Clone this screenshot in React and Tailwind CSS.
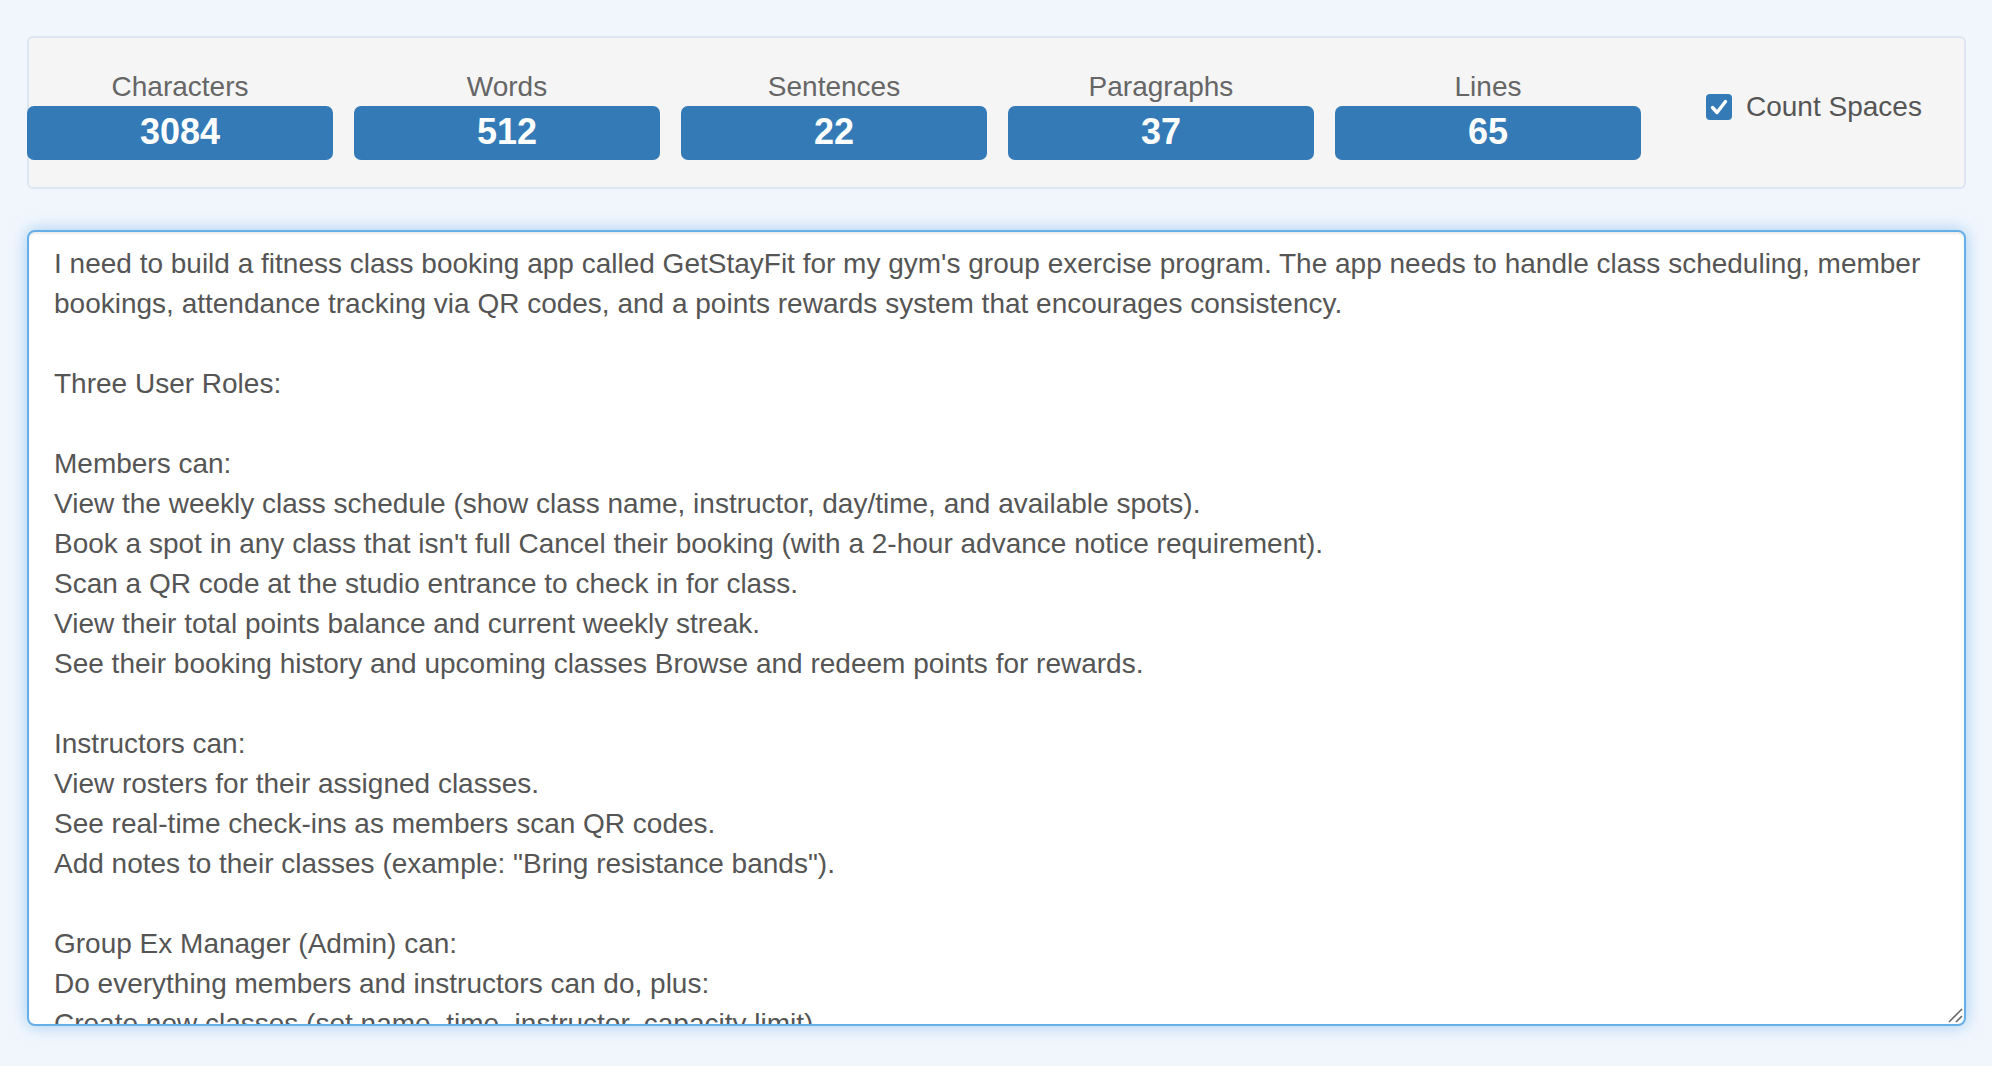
import React from 'react';

const stats = [
  { label: 'Characters', value: 3084 },
  { label: 'Words', value: 512 },
  { label: 'Sentences', value: 22 },
  { label: 'Paragraphs', value: 37 },
  { label: 'Lines', value: 65 },
];

const text = `I need to build a fitness class booking app called GetStayFit for my gym's group exercise program. The app needs to handle class scheduling, member bookings, attendance tracking via QR codes, and a points rewards system that encourages consistency.

Three User Roles:

Members can:
View the weekly class schedule (show class name, instructor, day/time, and available spots).
Book a spot in any class that isn't full Cancel their booking (with a 2-hour advance notice requirement).
Scan a QR code at the studio entrance to check in for class.
View their total points balance and current weekly streak.
See their booking history and upcoming classes Browse and redeem points for rewards.

Instructors can:
View rosters for their assigned classes.
See real-time check-ins as members scan QR codes.
Add notes to their classes (example: "Bring resistance bands").

Group Ex Manager (Admin) can:
Do everything members and instructors can do, plus:
Create new classes (set name, time, instructor, capacity limit).
Edit or cancel existing classes.
Manage the rewards catalog and point values.
View attendance reports for every class.`;

const Stat = ({ label, value }) => (
  <div className="w-[306px] flex flex-col items-center">
    <div className="text-[28px] leading-[40px] text-[#666]">{label}</div>
    <div className="-mt-px h-[54px] w-full rounded-[7px] bg-[#337ab7] pb-[2px] flex items-center justify-center text-white font-bold text-[36px] leading-none">
      {value}
    </div>
  </div>
);

const Checkbox = () => (
  <div className="w-[26px] h-[26px] rounded-[4px] bg-[#337ab7] flex items-center justify-center">
    <svg viewBox="0 0 26 26" className="w-[26px] h-[26px]" fill="none">
      <path d="M6.5 13.5l4.5 5L19.5 7.5" stroke="white" strokeWidth="3.4" strokeLinecap="round" strokeLinejoin="round" />
    </svg>
  </div>
);

export default function App() {
  return (
    <div className="min-h-screen bg-[#f1f6fd] pt-9 pl-[27px] pr-[26px] font-['Liberation_Sans',Arial,sans-serif]">
      <div className="h-[153px] border-2 border-[#dde6f0] rounded-[6px] bg-[#f5f5f5] pt-[29px] flex items-start">
        <div className="-ml-[2px] flex gap-[21px]">
          {stats.map((s) => (
            <Stat key={s.label} {...s} />
          ))}
        </div>
        <label className="ml-[65px] mt-[20px] flex items-center gap-[14px] h-[40px]">
          <Checkbox />
          <span className="text-[28px] leading-[40px] text-[#555]">Count Spaces</span>
        </label>
      </div>

      <div className="relative mt-[41px] h-[796px] border-2 border-[#66afe9] rounded-[8px] bg-white shadow-[inset_0_2px_2px_rgba(0,0,0,0.075),0_0_16px_rgba(102,175,233,0.6)] overflow-hidden">
        <div className="pl-[25px] pr-[24px] pt-[12px] text-[28px] leading-[40px] text-[#555] whitespace-pre-wrap">
          {text}
        </div>
        <svg className="absolute right-[1px] bottom-[1px] w-[16px] h-[16px]" viewBox="0 0 16 16" fill="none">
          <path d="M2 15L15 2" stroke="#666" strokeWidth="1.6" />
          <path d="M9 15L15 9" stroke="#666" strokeWidth="1.6" />
        </svg>
      </div>
    </div>
  );
}
